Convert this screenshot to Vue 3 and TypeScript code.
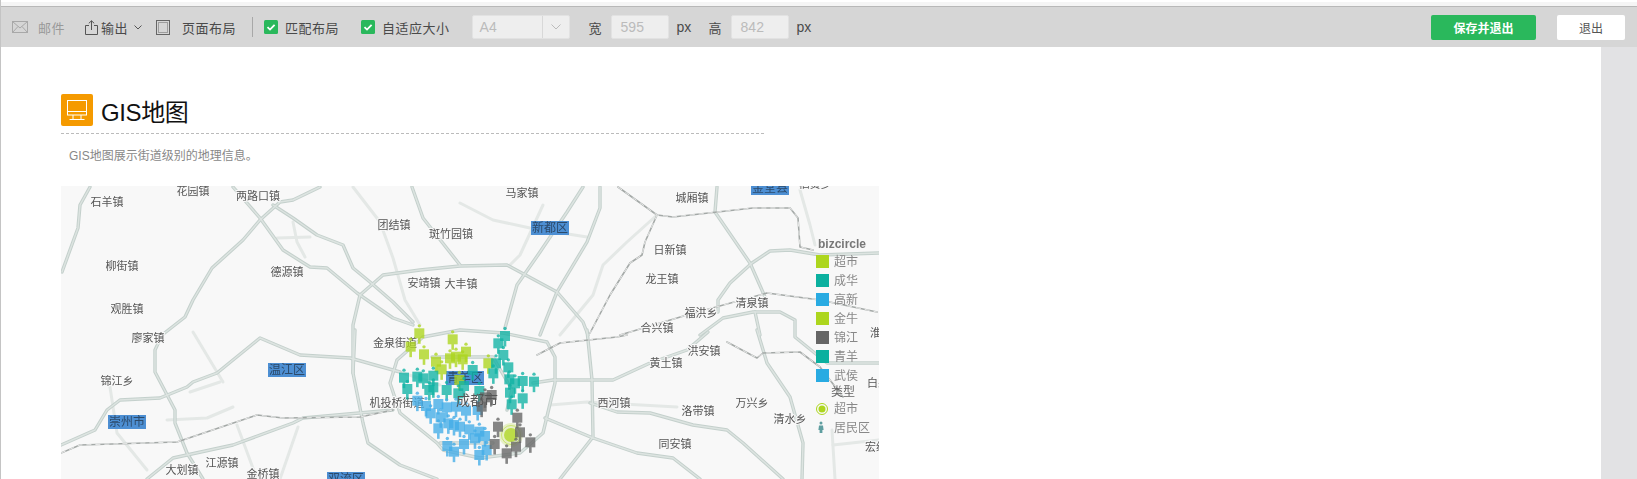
<template>
  <div class="page">
    <div class="top-strip"></div>
    <div class="toolbar">
      <div class="tool tool-mail">
        <svg width="16" height="12" viewBox="0 0 16 12" fill="none" stroke="#a8a8a8">
          <rect x="0.5" y="0.5" width="15" height="11" />
          <path d="M0.5 0.5 8 7 15.5 0.5M0.5 11.5 6 5.5M15.5 11.5 10 5.5" />
        </svg>
        <span class="muted wide">邮件</span>
      </div>
      <div class="tool tool-export">
        <svg width="13" height="15" viewBox="0 0 13 15" fill="none" stroke="#555">
          <path d="M4 5.5H0.5V14.5H12.5V5.5H9M6.5 10V0.8M3.8 3.3 6.5 0.8 9.2 3.3" />
        </svg>
        <span class="wide">输出</span>
        <svg class="caret" width="8" height="5" viewBox="0 0 8 5" fill="none" stroke="#555">
          <path d="M0.5 0.5 4 4 7.5 0.5" />
        </svg>
      </div>
      <div class="tool tool-layout">
        <svg width="14" height="15" viewBox="0 0 14 15" fill="none" stroke="#666">
          <rect x="0.5" y="0.5" width="13" height="14" />
          <rect x="2.5" y="2.5" width="9" height="10" stroke-dasharray="1 1" />
        </svg>
        <span class="wide">页面布局</span>
      </div>
      <div class="divider"></div>
      <label v-for="item in checks" :key="item" class="tool tool-check">
        <svg width="14" height="14" viewBox="0 0 14 14">
          <rect width="14" height="14" rx="1.5" fill="#2ab85c" />
          <path d="M3.5 7.2 6 9.6 10.6 4.8" fill="none" stroke="#fff" stroke-width="1.8" />
        </svg>
        <span class="wide">{{ item }}</span>
      </label>
      <div class="select">
        <span class="select-value">A4</span>
        <span class="select-arrow">
          <svg width="10" height="6" viewBox="0 0 10 6" fill="none" stroke="#bbb">
            <path d="M0.5 0.5 5 5 9.5 0.5" />
          </svg>
        </span>
      </div>
      <template v-for="size in sizes" :key="size.label">
        <span class="size-label">{{ size.label }}</span>
        <div class="size-input">{{ size.value }}</div>
        <span class="size-unit">px</span>
      </template>
      <button class="btn btn-save">保存并退出</button>
      <button class="btn btn-exit">退出</button>
    </div>

    <div class="body">
      <div class="content">
        <div class="heading">
          <span class="heading-icon">
            <svg width="22" height="22" viewBox="0 0 22 22" fill="none" stroke="#fff">
              <rect x="1.5" y="1.5" width="19" height="14.5" />
              <path d="M1.5 12.5H20.5M7 16V20M15 16V20M3.5 20.5H18.5" />
            </svg>
          </span>
          <h1 class="heading-text">GIS地图</h1>
        </div>
        <p class="desc">GIS地图展示街道级别的地理信息。</p>
        <div class="map">
          <svg width="818" height="293" viewBox="61 186 818 293" class="map-svg">
            <rect x="61" y="186" width="818" height="293" fill="#f8f8f8" />
            <polyline v-for="(r, i) in lightRoads" :key="'l' + i" :points="r" class="road-light" />
            <polyline v-for="(r, i) in roads" :key="'c' + i" :points="r" class="road-case" />
            <polyline v-for="(r, i) in roads" :key="'r' + i" :points="r" class="road-inner" />
            <polyline v-for="(r, i) in rails" :key="'a' + i" :points="r" class="rail" />
            <polyline v-for="(r, i) in rails" :key="'b' + i" :points="r" class="rail-dash" />

            <g v-for="d in districts" :key="d.name">
              <rect :x="d.x" :y="d.y" width="38" height="14" fill="#4d8fd3" />
              <text :x="d.x + 19" :y="d.y + 7" class="district">{{ d.name }}</text>
            </g>
            <text v-for="t in towns" :key="t.name" :x="t.x" :y="t.y" class="town">{{ t.name }}</text>

            <circle cx="511" cy="435" r="12" fill="#add61e" opacity="0.22" />
            <circle cx="511" cy="435" r="9.5" fill="none" stroke="#add61e" opacity="0.5" />
            <circle cx="511" cy="435" r="7" fill="#add61e" opacity="0.75" />
            <g v-for="(p, i) in pins" :key="i" :fill="p.color" opacity="0.78">
              <circle :cx="p.x" :cy="p.y - 7.5" r="1.7" />
              <rect :x="p.x - 5" :y="p.y - 5" width="10" height="10" />
              <rect :x="p.x - 1.3" :y="p.y + 4" width="2.6" height="6.5" />
            </g>
            <text x="477" y="400" class="city">成都市</text>

            <text x="818" y="248" class="legend-title">bizcircle</text>
            <g v-for="(l, i) in legend" :key="l.name">
              <rect x="816" :y="255 + i * 19" width="13" height="13" :fill="l.color" />
              <text x="834" :y="262 + i * 19" class="legend-text">{{ l.name }}</text>
            </g>
            <text x="831" y="392" class="legend-type">类型</text>
            <circle cx="822" cy="409" r="5.5" fill="#f8f8f8" stroke="#add61e" />
            <circle cx="822" cy="409" r="3.5" fill="#add61e" />
            <text x="834" y="409" class="legend-text">超市</text>
            <circle cx="821" cy="423" r="1.5" fill="#5f9ea0" />
            <path d="M819 425.5H823L823.6 430H822.4V433H819.6V430H818.4Z" fill="#5f9ea0" />
            <text x="834" y="428" class="legend-text">居民区</text>
          </svg>
        </div>
      </div>
      <div class="scrollbar"></div>
    </div>
  </div>
</template>

<script setup lang="ts">
const checks = ['匹配布局', '自适应大小']
const sizes = [
  { label: '宽', value: '595' },
  { label: '高', value: '842' },
]

const GREEN = '#add61e'
const TEAL = '#11b3a5'
const BLUE = '#43ade8'
const GRAY = '#666666'

const legend = [
  { name: '超市', color: GREEN },
  { name: '成华', color: '#0bb09f' },
  { name: '高新', color: '#29abe2' },
  { name: '金牛', color: GREEN },
  { name: '锦江', color: GRAY },
  { name: '青羊', color: '#0bb09f' },
  { name: '武侯', color: '#29abe2' },
]

const roads = [
  '320,187 293,200 280,202 260,220 243,240 212,268 193,300 185,317 162,335 155,350 155,372 175,410 175,423 187,453 203,479',
  '233,187 260,218 283,250 310,267 327,268 357,293 393,318 413,325',
  '273,205 293,218 317,235 343,245 353,268 370,282 393,302 413,322',
  '353,373 353,325 360,295 383,275 420,270 460,266 507,265 557,292 583,322 588,335',
  '90,187 80,205 78,228 62,272',
  '61,445 95,430 107,410 120,400 160,398 187,387 193,382 217,373 260,338 300,355 350,358 400,372',
  '355,330 353,373 363,423 368,443 400,465 437,479',
  '147,479 173,458 233,445 293,423 303,418 393,410',
  '423,337 460,330 503,333 547,342 555,357 555,383 543,433 520,453 480,458 443,450 437,443 400,413 390,383 397,360 423,337',
  '432,357 493,357 512,390 507,410',
  '440,443 493,443',
  '533,383 553,380 593,380 613,380 650,363 687,350 708,332',
  '700,335 723,318 753,312 780,312 795,320 795,337 827,363 879,363',
  '755,312 760,335',
  '757,330 767,363 790,397 803,443 802,479',
  '587,330 592,380 593,437 560,479',
  '545,418 593,438 637,453 673,458 700,479',
  '590,403 617,412 650,413 693,425 727,430 743,443 783,479',
  '717,187 715,212 750,263 765,297',
  '718,312 718,300 730,283 752,263 770,251 790,250 820,255 879,253',
  '600,187 600,208 587,242 557,292 540,335',
  '583,187 567,212 540,252 517,285 505,328',
  '412,187 423,218 460,265',
]

const lightRoads = [
  '460,203 493,220 530,228 587,237',
  '167,420 207,418 233,407',
  '298,427 280,479',
  '110,387 117,433 147,470',
  '193,332 223,382',
  '190,392 220,382',
  '237,425 257,479',
  '550,405 587,402 677,407',
  '657,215 627,242 603,265 593,295 560,335',
  '543,205 520,255 510,265',
  '277,238 310,237',
  '293,222 297,242 305,257',
  '353,187 380,222 393,258 405,300 420,325',
  '800,190 810,225 815,245',
  '832,430 835,479',
  '833,445 879,440',
  '400,372 440,385',
]

const rails = [
  '61,453 80,445 177,442 257,415 283,418 360,417 393,410',
  '618,187 657,215 673,217 753,208 790,208 798,218 800,247 813,250',
  '657,215 645,242 642,255 630,263 610,295 590,333',
  '620,335 687,315 767,293 820,300 877,312',
  '537,355 560,343 617,337 627,335',
  '727,342 757,358 763,353 800,352 820,367 843,397',
]

const districts = [
  { name: '温江区', x: 268, y: 363 },
  { name: '崇州市', x: 108, y: 415 },
  { name: '双流区', x: 327, y: 472 },
  { name: '新都区', x: 531, y: 221 },
  { name: '金堂县', x: 751, y: 181 },
  { name: '青羊区', x: 446, y: 371 },
]

const towns = [
  { name: '石羊镇', x: 107, y: 202 },
  { name: '花园镇', x: 193, y: 191 },
  { name: '两路口镇', x: 258, y: 196 },
  { name: '团结镇', x: 394, y: 225 },
  { name: '柳街镇', x: 122, y: 266 },
  { name: '德源镇', x: 287, y: 272 },
  { name: '安靖镇', x: 424, y: 283 },
  { name: '大丰镇', x: 461, y: 284 },
  { name: '观胜镇', x: 127, y: 309 },
  { name: '斑竹园镇', x: 451, y: 234 },
  { name: '廖家镇', x: 148, y: 338 },
  { name: '金泉街道', x: 395, y: 343 },
  { name: '锦江乡', x: 117, y: 381 },
  { name: '机投桥街道', x: 397, y: 403 },
  { name: '江源镇', x: 222, y: 463 },
  { name: '大划镇', x: 182, y: 470 },
  { name: '金桥镇', x: 263, y: 474 },
  { name: '马家镇', x: 522, y: 193 },
  { name: '城厢镇', x: 692, y: 198 },
  { name: '日新镇', x: 670, y: 250 },
  { name: '龙王镇', x: 662, y: 279 },
  { name: '福洪乡', x: 701, y: 313 },
  { name: '清泉镇', x: 752, y: 303 },
  { name: '合兴镇', x: 657, y: 328 },
  { name: '洪安镇', x: 704, y: 351 },
  { name: '黄土镇', x: 666, y: 363 },
  { name: '西河镇', x: 614, y: 403 },
  { name: '洛带镇', x: 698, y: 411 },
  { name: '万兴乡', x: 752, y: 403 },
  { name: '清水乡', x: 790, y: 419 },
  { name: '同安镇', x: 675, y: 444 },
  { name: '淮口', x: 881, y: 333 },
  { name: '白果', x: 878, y: 383 },
  { name: '宏缘', x: 876, y: 447 },
  { name: '栖贤乡', x: 815, y: 184 },
]

// 坐标取自 3 倍放大的截图，偏移 (380, 310)
const toPins = (color: string, list: number[][]) =>
  list.map(([x, y]) => ({ color, x: 380 + x / 3, y: 310 + y / 3 }))

const pins = [
  ...toPins(GREEN, [[118, 70], [92, 110], [132, 133], [218, 88], [258, 125], [168, 155], [185, 178], [210, 145], [228, 140], [248, 148], [325, 160], [238, 210]]),
  ...toPins(TEAL, [[375, 78], [355, 100], [370, 135], [348, 160], [385, 172], [340, 190], [72, 203], [112, 200], [130, 205], [160, 197], [82, 237], [148, 240], [160, 232], [200, 240], [278, 180], [252, 228], [235, 250], [298, 243], [388, 208], [405, 220], [428, 213], [462, 215], [390, 248], [428, 265], [395, 283]]),
  ...toPins(BLUE, [[112, 272], [138, 288], [175, 282], [200, 292], [228, 290], [152, 310], [182, 322], [258, 302], [293, 300], [205, 340], [222, 345], [240, 350], [175, 355], [268, 358], [298, 365], [285, 385], [315, 378], [252, 402], [202, 408], [222, 425], [298, 435], [320, 420]]),
  ...toPins(GRAY, [[335, 255], [315, 262], [305, 290], [412, 323], [354, 350], [420, 367], [344, 402], [408, 410], [380, 430], [451, 397]]),
]
</script>

<style>
html,
body {
  margin: 0;
  overflow: hidden;
  background: #fff;
}
</style>

<style scoped>
.page {
  width: 1637px;
  height: 479px;
  overflow: hidden;
  display: flex;
  flex-direction: column;
  box-sizing: border-box;
  border-left: 1px solid #c4c4c4;
  padding-top: 2px;
  font-family: "Liberation Sans", "Noto Sans CJK SC", sans-serif;
  font-size: 13px;
  color: #4a4a4a;
}
.top-strip {
  height: 4px;
  background: #f5f5f5;
}
.toolbar {
  height: 41px;
  flex: none;
  display: flex;
  align-items: center;
  box-sizing: border-box;
  border-top: 1px solid #b8b8b8;
  background: #d6d6d6;
  padding: 0 12px 0 11px;
}
.tool {
  display: flex;
  align-items: center;
  flex: none;
}
.muted {
  color: #999;
}
.wide {
  letter-spacing: 0.5px;
}
.tool-mail {
  gap: 10px;
}
.tool-export {
  margin-left: 20px;
  gap: 3px;
}
.caret {
  margin-left: 3px;
}
.tool-layout {
  margin-left: 14px;
  gap: 12px;
}
.divider {
  width: 1px;
  height: 20px;
  margin-left: 16px;
  margin-right: 11px;
  background: #a8a8a8;
}
.tool-check {
  gap: 7px;
  margin-right: 22px;
}
.select {
  width: 98px;
  height: 24px;
  display: flex;
  box-sizing: border-box;
  border: 1px solid #e2e2e2;
  border-radius: 2px;
  background: #eee;
  color: #bbb;
  font-size: 14px;
  margin-right: 2px;
}
.select-value {
  flex: 1;
  line-height: 22px;
  padding-left: 7px;
}
.select-arrow {
  width: 26px;
  display: flex;
  align-items: center;
  justify-content: center;
  border-left: 1px solid #d8d8d8;
}
.size-label {
  margin-left: 17px;
  width: 13px;
  flex: none;
}
.size-input {
  width: 58px;
  height: 24px;
  margin-left: 9px;
  box-sizing: border-box;
  flex: none;
  border: 1px solid #e2e2e2;
  border-radius: 2px;
  background: #eee;
  color: #bbb;
  font-size: 14px;
  line-height: 22px;
  padding-left: 9px;
}
.size-unit {
  margin-left: 8px;
  width: 15px;
  flex: none;
  font-size: 14px;
}
.btn {
  height: 25px;
  border: 0;
  border-radius: 2px;
  padding: 0;
  font-family: inherit;
  font-size: 12px;
  flex: none;
}
.btn-save {
  width: 105px;
  margin-left: auto;
  background: #2ab85c;
  color: #fff;
  font-weight: 700;
}
.btn-exit {
  width: 68px;
  margin-left: 21px;
  background: #fff;
  color: #555;
}
.body {
  flex: 1;
  min-height: 0;
  display: flex;
}
.content {
  flex: 1;
  min-width: 0;
  padding: 47px 0 0 60px;
  background: #fff;
}
.scrollbar {
  width: 36px;
  flex: none;
  background: #e2e2e4;
}
.heading {
  width: 703px;
  display: flex;
  align-items: center;
  gap: 8px;
  padding-bottom: 7px;
  border-bottom: 1px dashed #bbb;
}
.heading-icon {
  width: 32px;
  height: 32px;
  flex: none;
  display: flex;
  align-items: center;
  justify-content: center;
  border-radius: 2px;
  background: #f59a00;
}
.heading-text {
  margin: 3px 0 0;
  height: 29px;
  font-size: 24px;
  font-weight: 400;
  letter-spacing: -0.4px;
  line-height: 32px;
  color: #111;
}
.desc {
  margin: 14px 0 0 8px;
  font-size: 12px;
  line-height: 16px;
  color: #888;
}
.map {
  width: 818px;
  height: 293px;
  margin-top: 22px;
  overflow: hidden;
}
.map-svg {
  display: block;
  filter: blur(0.35px);
}
.road-case,
.road-inner,
.road-light,
.rail,
.rail-dash {
  fill: none;
  stroke-linejoin: round;
  stroke-linecap: round;
}
.road-case {
  stroke: #c4d0cc;
  stroke-width: 3.4;
}
.road-inner {
  stroke: #dde4e1;
  stroke-width: 1.4;
}
.road-light {
  stroke: #e4e8e6;
  stroke-width: 3;
}
.rail {
  stroke: #a4a9a7;
  stroke-width: 1.6;
}
.rail-dash {
  stroke: #f8f8f8;
  stroke-width: 0.8;
  stroke-dasharray: 5 4;
  stroke-linecap: butt;
}
.town,
.district,
.city {
  text-anchor: middle;
  dominant-baseline: central;
}
.town {
  font-size: 11px;
  fill: #555;
  stroke: #f8f8f8;
  stroke-width: 2px;
  paint-order: stroke;
}
.district {
  font-size: 12px;
  fill: #2c4a6a;
}
.city {
  font-size: 14px;
  fill: #555;
}
.legend-title {
  font-size: 12px;
  font-weight: 700;
  fill: #777;
}
.legend-text {
  font-size: 12px;
  fill: #888;
  dominant-baseline: central;
}
.legend-type {
  font-size: 12px;
  fill: #666;
  dominant-baseline: central;
}
</style>
